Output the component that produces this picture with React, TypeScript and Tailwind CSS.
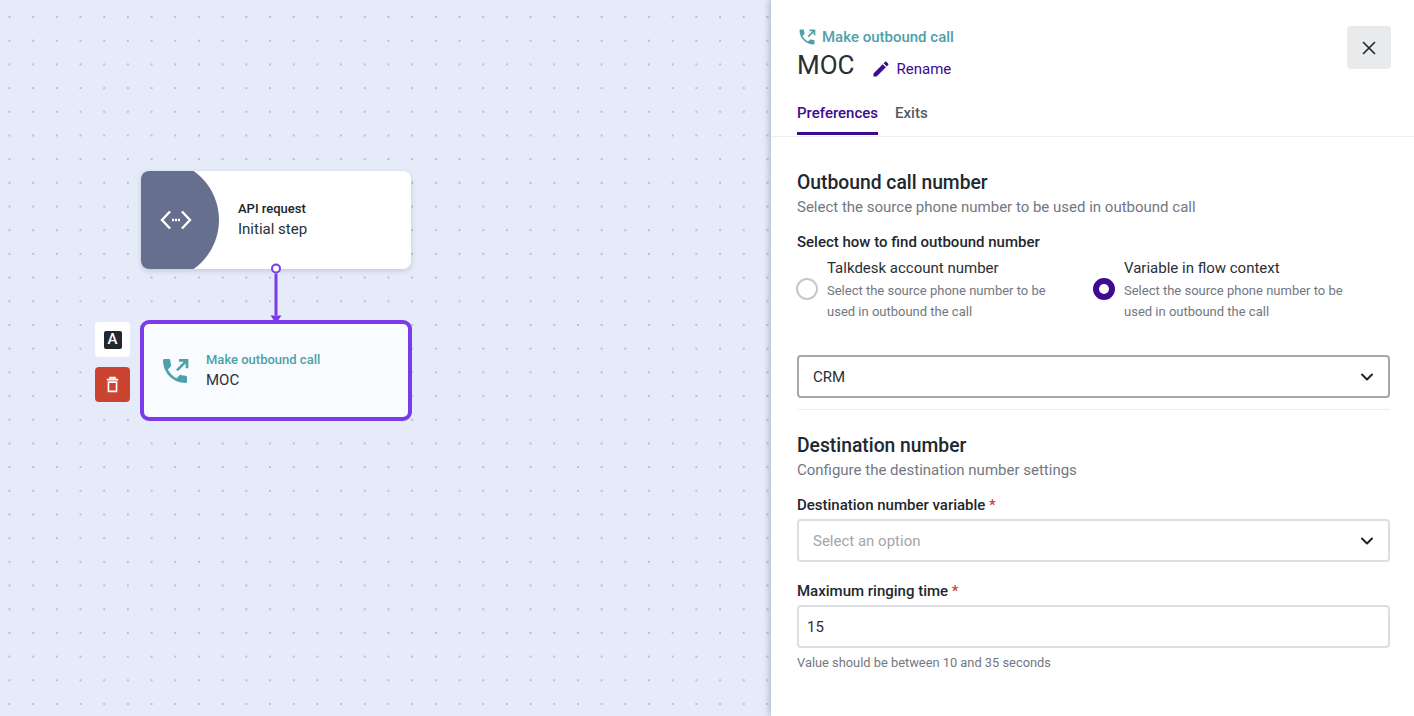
import { ChevronDown, X } from "lucide-react";

function PhoneOutIcon({ className }: { className?: string }) {
  return (
    <svg viewBox="0 0 24 24" className={className} fill="none">
      <path
        fill="currentColor"
        d="M6.62 10.79c1.44 2.83 3.76 5.14 6.59 6.59l2.2-2.2c.27-.27.67-.36 1.02-.24 1.12.37 2.33.57 3.57.57.55 0 1 .45 1 1V20c0 .55-.45 1-1 1-9.39 0-17-7.61-17-17 0-.55.45-1 1-1h3.5c.55 0 1 .45 1 1 0 1.25.2 2.45.57 3.57.11.35.03.74-.25 1.02l-2.2 2.2z"
      />
      <path
        stroke="currentColor"
        strokeWidth="2"
        d="M13.5 11.5 20 5M15 4h6v6"
      />
    </svg>
  );
}

function Radio({ checked }: { checked?: boolean }) {
  if (checked) {
    return (
      <span className="w-[22px] h-[22px] mb-[3px] rounded-full border-[6px] border-[#3d0a91] bg-white shrink-0" />
    );
  }
  return (
    <span className="w-[22px] h-[22px] mb-[3px] rounded-full border-2 border-[#c4c7cc] bg-white shrink-0" />
  );
}

function RadioOption({ title, checked }: { title: string; checked?: boolean }) {
  return (
    <div className="flex items-center gap-[9px] w-[297px]">
      <Radio checked={checked} />
      <div>
        <div className="text-[15px] leading-[20px] text-[#2a2f36]">{title}</div>
        <div className="text-[13px] leading-[21px] mt-[2px] text-[#73777f] w-[240px]">
          Select the source phone number to be used in outbound the call
        </div>
      </div>
    </div>
  );
}

function SelectBox({
  value,
  placeholder,
  dark,
}: {
  value: string;
  placeholder?: boolean;
  dark?: boolean;
}) {
  return (
    <div
      className={`h-[43px] rounded border-2 flex items-center justify-between pl-[14px] pr-[11px] bg-white text-[15px] ${
        dark ? "border-[#a4a8ae]" : "border-[#dcdee2]"
      } ${placeholder ? "text-[#a3a6ab]" : "text-[#2a2f36]"}`}
    >
      <span className="pt-[1px]">{value}</span>
      <ChevronDown className="w-[20px] h-[20px] text-[#1f2329]" strokeWidth={2.4} />
    </div>
  );
}

function Canvas() {
  return (
    <div className="relative flex-1 bg-[#e5ebf8] bg-[radial-gradient(circle,#bcc0c8_1px,transparent_1.2px)] bg-[size:23.7px_23.7px] bg-[position:-2.4px_5.2px]">
      {/* first node */}
      <div className="absolute left-[141px] top-[171px] w-[270px] h-[98px] bg-white rounded-lg shadow-[0_2px_5px_rgba(60,70,100,0.2)] overflow-hidden flex items-center">
        <div className="absolute left-[-42px] top-[-11px] w-[120px] h-[120px] rounded-full bg-[#676f8e]" />
        <svg
          viewBox="0 0 32 20"
          className="absolute left-[19px] top-[39px] w-[32px] h-[20px] text-white"
          fill="none"
          stroke="currentColor"
          strokeWidth="2.4"
        >
          <path d="M10 1.5 2 10l8 8.5M22 1.5 30 10l-8 8.5" />
          <path d="M12 10h2M15 10h2M18 10h2" />
        </svg>
        <div className="relative ml-[97px]">
          <div className="text-[13px] leading-[16px] font-medium text-[#20252b]">API request</div>
          <div className="text-[15px] leading-[20px] mt-[2px] text-[#2a2f36]">Initial step</div>
        </div>
      </div>

      {/* connector */}
      <svg
        viewBox="0 0 14 62"
        className="absolute left-[269px] top-[261px] w-[14px] h-[63px] text-[#7c3aed]"
        fill="none"
      >
        <path d="M7 12v42" stroke="currentColor" strokeWidth="3" />
        <path d="M1.5 54h11L7 62z" fill="currentColor" />
        <circle cx="7" cy="7" r="4" fill="#fff" stroke="currentColor" strokeWidth="2" />
      </svg>

      {/* second node */}
      <div className="absolute left-[140px] top-[320px] w-[272px] h-[101px] rounded-[9px] border-4 border-[#7c3aed] bg-[#f8fbff] flex items-center">
        <PhoneOutIcon className="ml-[15px] w-[32px] h-[32px] text-[#4ea1a8]" />
        <div className="ml-[15px]">
          <div className="text-[13px] leading-[16px] font-medium text-[#4ea1a8]">Make outbound call</div>
          <div className="text-[15px] leading-[20px] mt-[2px] text-[#2a2f36]">MOC</div>
        </div>
      </div>

      {/* side actions */}
      <div className="absolute left-[95px] top-[322px] w-[35px] h-[35px] rounded bg-white flex items-center justify-center">
        <span className="w-[18px] h-[18px] rounded-[2px] bg-[#22272e] text-white text-[15px] font-medium flex items-center justify-center">
          A
        </span>
      </div>
      <div className="absolute left-[95px] top-[367px] w-[35px] h-[35px] rounded bg-[#cb4432] flex items-center justify-center">
        <svg viewBox="0 0 16 20" className="w-[13px] h-[17px] text-white" fill="none" stroke="currentColor" strokeWidth="2">
          <path d="M1 4h14M5 3V1.5h6V3" />
          <path d="M3 7h10v11.5H3z" />
        </svg>
      </div>
    </div>
  );
}

export default function App() {
  return (
    <div className="flex h-[716px] w-[1414px] overflow-hidden font-['Roboto',sans-serif]">
      <Canvas />

      <div className="relative w-[643px] bg-white shadow-[-2px_0_6px_rgba(60,70,110,0.28)]">
        <div className="relative px-[26px] pt-[27px] h-[137px] border-b border-[#eceef0]">
          <div className="flex items-center gap-[5px] text-[15px] leading-[20px] font-medium text-[#4ea1a8]">
            <PhoneOutIcon className="w-[20px] h-[20px]" />
            Make outbound call
          </div>
          <div className="flex items-center mt-[3px] h-[30px]">
            <span className="text-[26px] leading-[30px] text-[#2a2f36]">MOC</span>
            <svg viewBox="0 0 24 24" className="ml-[16px] mt-[8px] w-[20px] h-[20px] text-[#3d0a91]" fill="currentColor">
              <path d="M3 17.25V21h3.75L17.81 9.94l-3.75-3.75L3 17.25zM20.71 7.04a1 1 0 0 0 0-1.41l-2.34-2.34a1 1 0 0 0-1.41 0l-1.83 1.83 3.75 3.75 1.83-1.83z" />
            </svg>
            <span className="ml-[6px] mt-[8px] text-[15px] text-[#3d0a91]">Rename</span>
          </div>
          <div className="flex gap-[17px] mt-[23px] text-[15px] font-medium">
            <div className="h-[32px] border-b-[3px] border-[#3d0a91] text-[#3d0a91] leading-[20px]">Preferences</div>
            <div className="text-[#555a63] leading-[20px]">Exits</div>
          </div>
          <button className="absolute right-[23px] top-[26px] w-[44px] h-[43px] rounded bg-[#e9eaec] flex items-center justify-center">
            <X className="w-[22px] h-[22px] text-[#22272e]" strokeWidth={1.8} />
          </button>
        </div>

        <div className="pl-[26px] pr-[24px] pt-[35px]">
          <h2 className="text-[19.3px] leading-[22px] font-medium text-[#22272e]">Outbound call number</h2>
          <p className="text-[15px] leading-[20px] mt-[3px] text-[#73777f]">
            Select the source phone number to be used in outbound call
          </p>

          <div className="text-[15px] leading-[20px] font-medium text-[#22272e] mt-[15px]">
            Select how to find outbound number
          </div>

          <div className="flex mt-[6px] -ml-[1px]">
            <RadioOption title="Talkdesk account number" />
            <RadioOption title="Variable in flow context" checked />
          </div>

          <div className="mt-[33px]">
            <SelectBox value="CRM" dark />
          </div>

          <div className="mt-[11px] border-t border-[#eceef0]" />

          <h2 className="text-[19.3px] leading-[22px] font-medium text-[#22272e] mt-[25px]">Destination number</h2>
          <p className="text-[15px] leading-[20px] mt-[3px] text-[#73777f]">Configure the destination number settings</p>

          <div className="text-[15px] leading-[20px] font-medium text-[#22272e] mt-[15px]">
            Destination number variable <span className="text-[#cb4432]">*</span>
          </div>
          <div className="mt-[4px]">
            <SelectBox value="Select an option" placeholder />
          </div>

          <div className="text-[15px] leading-[20px] font-medium text-[#22272e] mt-[19px]">
            Maximum ringing time <span className="text-[#cb4432]">*</span>
          </div>
          <div className="mt-[4px] h-[43px] rounded border-2 border-[#dcdee2] flex items-center pl-[8px] pt-[1px] text-[15px] text-[#2a2f36]">
            15
          </div>
          <div className="text-[12.85px] leading-[16px] mt-[7px] text-[#73777f]">Value should be between 10 and 35 seconds</div>
        </div>
      </div>
    </div>
  );
}
